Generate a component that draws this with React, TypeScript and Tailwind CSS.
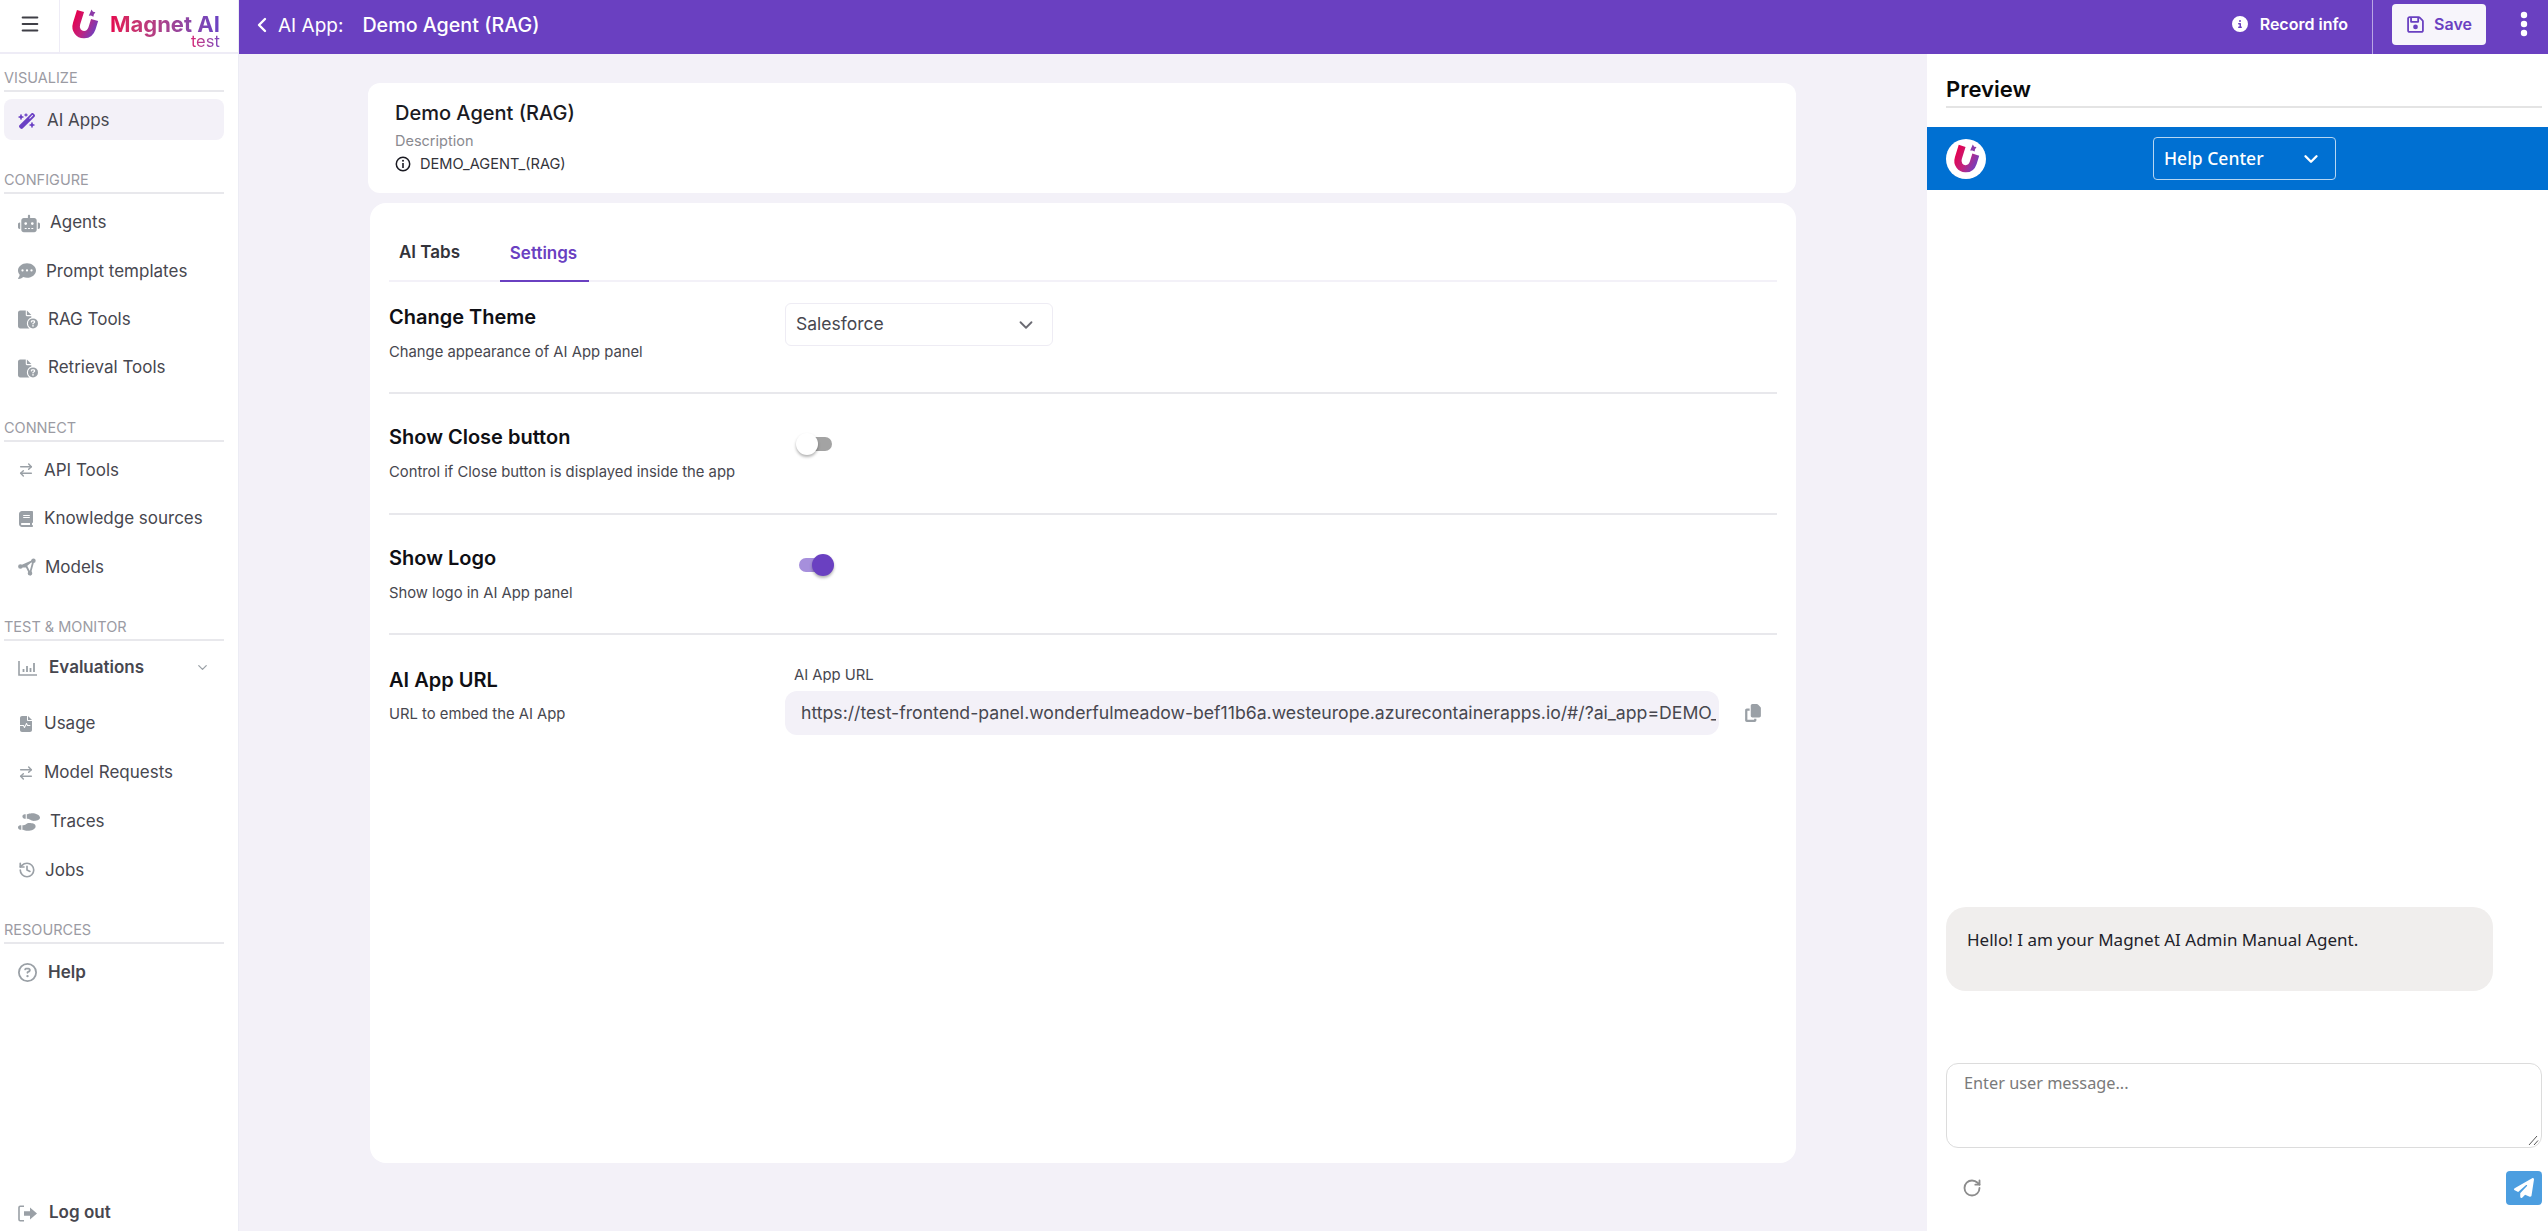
import { ArrowRightLeft, ChevronDown, ChevronLeft, History, Menu, RotateCw } from "lucide-react";
import {
  FaBook,
  FaCircleInfo,
  FaCommentDots,
  FaCopy,
  FaFileCircleQuestion,
  FaFileWaveform,
  FaPaperPlane,
  FaRegCircleQuestion,
  FaRegFloppyDisk,
  FaRobot,
  FaShoePrints,
  FaWandMagicSparkles,
} from "react-icons/fa6";

const MagnetLogo = ({ size = 30, id = "magnet" }: { size?: number; id?: string }) => (
  <svg width={size} height={size} viewBox="0 0 30 30" fill="none">
    <defs>
      <linearGradient id={id} gradientUnits="userSpaceOnUse" x1="4" y1="8" x2="28" y2="20">
        <stop offset="0" stopColor="#e5004e" />
        <stop offset="0.5" stopColor="#c0237f" />
        <stop offset="1" stopColor="#6a42c4" />
      </linearGradient>
    </defs>
    <path
      d="M10.5 2 L6.6 14.5 C4.6 21 9 25.4 13.8 25.6 C18 25.8 20.8 23 22 19.4 L24.6 11"
      stroke={`url(#${id})`}
      strokeWidth="7.4"
    />
    <path d="M21.5 0.5 L23 2.8 L25.4 3.2 L23.8 5.4 L23.4 7.8 L21 6.6 L18.8 6.8 L19.8 4.4 Z" fill="#8c3aa8" />
  </svg>
);

const ModelsIcon = () => (
  <svg width="18" height="18" viewBox="0 0 18 18" fill="#9aa0a6" stroke="#9aa0a6" strokeWidth="1.8">
    <path d="M2 8.5 L15.5 2.5 L12 15.5 L8.5 8.5 Z" fill="none" />
    <path d="M2 8.5 L15.5 2.5 L8.5 8.5 Z" stroke="none" />
    <circle cx="2.4" cy="8.5" r="1.4" />
    <circle cx="15.4" cy="2.8" r="1.4" />
    <circle cx="12" cy="15.2" r="1.4" />
  </svg>
);

const ChartIcon = () => (
  <svg width="20" height="16" viewBox="0 0 20 16" fill="none" stroke="#9aa0a6">
    <path d="M1 1 V15 H19" strokeWidth="1.6" />
    <path d="M5.5 12 V9 M9 12 V6 M12.5 12 V8 M16 12 V3" strokeWidth="1.8" />
  </svg>
);

const LogoutIcon = () => (
  <svg width="20" height="17" viewBox="0 0 20 17" fill="none">
    <path d="M6 1.2 H2.2 C1.5 1.2 1 1.7 1 2.4 V14.6 C1 15.3 1.5 15.8 2.2 15.8 H6" stroke="#9aa0a6" strokeWidth="1.6" />
    <path d="M6 6.2 H12 V2.5 L19 8.5 L12 14.5 V10.8 H6 Z" fill="#9aa0a6" />
  </svg>
);

const iconClass = "text-[#9aa0a6]";

const configureItems = [
  { name: "Agents", icon: <FaRobot size={19} className={`${iconClass} w-[22px]`} />, gapClass: "gap-[10px]" },
  { name: "Prompt templates", icon: <FaCommentDots size={18} className={iconClass} />, gapClass: "gap-[10px]" },
  { name: "RAG Tools", icon: <FaFileCircleQuestion size={19} className={`${iconClass} w-[20px]`} />, gapClass: "gap-[10px]" },
  { name: "Retrieval Tools", icon: <FaFileCircleQuestion size={19} className={`${iconClass} w-[20px]`} />, gapClass: "gap-[10px]" },
];

const connectItems = [
  { name: "API Tools", icon: <ArrowRightLeft size={18} strokeWidth={2.2} className={`${iconClass} w-[16px]`} />, gapClass: "gap-[10px]" },
  { name: "Knowledge sources", icon: <FaBook size={16} className={`${iconClass} w-[16px]`} />, gapClass: "gap-[10px]" },
  { name: "Models", icon: <ModelsIcon />, gapClass: "gap-[9px]" },
];

const monitorItems = [
  { name: "Usage", icon: <FaFileWaveform size={16} className={`${iconClass} w-[16px]`} />, gapClass: "gap-[10px]" },
  { name: "Model Requests", icon: <ArrowRightLeft size={18} strokeWidth={2.2} className={`${iconClass} w-[16px]`} />, gapClass: "gap-[10px]" },
  { name: "Traces", icon: <FaShoePrints size={18} className={`${iconClass} w-[22px]`} />, gapClass: "gap-[10px]" },
  { name: "Jobs", icon: <History size={18} strokeWidth={2.2} className={iconClass} />, gapClass: "gap-[9px]" },
];

const SectionLabel = ({ label, className = "" }: { label: string; className?: string }) => (
  <div className={`box-border h-[23px] shrink-0 border-b-2 border-[#e8e8ec] text-[14.5px] leading-[18px] text-[#9b9ba3] ${className}`}>
    {label}
  </div>
);

const NavRow = ({ name, icon, gapClass, rowHeight }: { name: string; icon: React.ReactNode; gapClass: string; rowHeight: string }) => (
  <div className={`flex items-center pt-[2px] pl-[14px] text-[17px] text-[#47474f] ${rowHeight} ${gapClass}`}>
    {icon}
    <span>{name}</span>
  </div>
);

const Sidebar = () => (
  <aside className="flex h-full w-[239px] shrink-0 flex-col border-r border-[#ececf4] bg-white">
    <div className="flex h-[54px] shrink-0 items-start border-b-2 border-[#eeecf6]">
      <div className="flex h-full w-[60px] items-center justify-center border-r border-[#eeecf6] pb-[5px]">
        <Menu size={22} strokeWidth={2.2} className="text-[#3f3f46]" />
      </div>
      <div className="flex items-start gap-[10px] pl-[10px]">
        <div className="mt-[9px]">
          <MagnetLogo size={30} id="magnet-side" />
        </div>
        <div className="mt-[12px] flex flex-col items-end">
          <span className="bg-gradient-to-r from-[#e5004e] to-[#6a42c4] bg-clip-text text-[22px] leading-[25px] font-bold text-transparent">
            Magnet AI
          </span>
          <span className="mt-[-3px] bg-gradient-to-r from-[#d81e73] to-[#7a46bf] bg-clip-text text-[16.5px] leading-[14px] text-transparent">
            test
          </span>
        </div>
      </div>
    </div>

    <nav className="flex flex-1 flex-col pt-[15px] pr-[14px] pb-[3px] pl-1">
      <SectionLabel label="VISUALIZE" />
      <div className="mt-[7px] flex h-[41px] items-center gap-[11px] rounded-lg bg-[#f3f1f8] pt-[2px] pl-[14px] text-[17px] text-[#47474f]">
        <FaWandMagicSparkles size={18} className="text-[#6a40c4]" />
        <span>AI Apps</span>
      </div>

      <SectionLabel label="CONFIGURE" className="mt-[31px]" />
      <div className="mt-1">
        {configureItems.map((item) => (
          <NavRow key={item.name} {...item} rowHeight="h-[48.3px]" />
        ))}
      </div>

      <SectionLabel label="CONNECT" className="mt-[28px]" />
      <div className="mt-[3px]">
        {connectItems.map((item) => (
          <NavRow key={item.name} {...item} rowHeight="h-[48.5px]" />
        ))}
      </div>

      <SectionLabel label="TEST & MONITOR" className="mt-[27px]" />
      <div className="mt-1 flex h-[44px] items-center gap-[11px] pt-[2px] pl-[14px] text-[17px] font-semibold text-[#47474f]">
        <ChartIcon />
        <span>Evaluations</span>
        <ChevronDown size={15} className="mr-[14px] ml-auto text-[#9aa0a6]" />
      </div>
      <div className="mt-[10px]">
        {monitorItems.map((item) => (
          <NavRow key={item.name} {...item} rowHeight="h-[48.8px]" />
        ))}
      </div>

      <SectionLabel label="RESOURCES" className="mt-[27px]" />
      <div className="mt-[7px] flex h-[42px] items-center gap-[11px] pt-[2px] pl-[14px] text-[17px] font-semibold text-[#47474f]">
        <FaRegCircleQuestion size={19} className={iconClass} />
        <span>Help</span>
      </div>

      <div className="mt-auto flex h-[30px] items-center gap-[11px] pl-[14px] text-[17px] font-semibold text-[#47474f]">
        <LogoutIcon />
        <span>Log out</span>
      </div>
    </nav>
  </aside>
);

const TopBar = () => (
  <header className="flex h-[54px] shrink-0 items-center bg-[#6a40c1] text-white">
    <ChevronLeft size={24} strokeWidth={2.4} className="mb-[4px] ml-[11px]" />
    <span className="mb-[2px] ml-[4px] text-[19px]">AI App:</span>
    <span className="mb-[2px] ml-[19px] text-[19.7px] font-medium">Demo Agent (RAG)</span>
    <div className="ml-auto flex h-full items-center">
      <FaCircleInfo size={16} className="mb-[6px]" />
      <span className="mb-[6px] ml-[12px] text-[16px] font-semibold">Record info</span>
      <div className="ml-[24px] h-full w-px bg-[#b9a6e3]" />
      <button className="mb-[6px] ml-[19px] flex h-[41px] w-[94px] items-center justify-center gap-[9px] rounded bg-[#f7f5fb] text-[16px] font-semibold text-[#6a40c1]">
        <FaRegFloppyDisk size={19} />
        Save
      </button>
      <div className="mb-[6px] flex w-[62px] justify-center pl-[14px]">
        <svg width="8" height="26" viewBox="0 0 8 26" fill="white">
          <circle cx="4" cy="4" r="3.2" />
          <circle cx="4" cy="13" r="3.2" />
          <circle cx="4" cy="22" r="3.2" />
        </svg>
      </div>
    </div>
  </header>
);

const SettingRow = ({
  title,
  description,
  height,
  children,
}: {
  title: string;
  description: string;
  height: string;
  children: React.ReactNode;
}) => (
  <div className={`flex border-b-2 border-[#e8e8ec] ${height}`}>
    <div className="w-[396px] shrink-0">
      <div className="text-[20px] leading-[28px] font-semibold text-[#0f0f14]">{title}</div>
      <div className="mt-[11px] text-[14.8px] leading-[20px] text-[#47474f]">{description}</div>
    </div>
    {children}
  </div>
);

const Toggle = ({ on }: { on: boolean }) => (
  <div className="relative h-[14px] w-[36px]">
    <div className={`ml-[2px] h-full w-[34px] rounded-full ${on ? "bg-[#a68fdc]" : "bg-[#a3a3a3]"}`} />
    <div
      className={`absolute top-[-4px] h-[22px] w-[22px] rounded-full shadow-[0_2px_3px_rgba(0,0,0,0.3)] ${
        on ? "right-[-1px] bg-[#6a40c1]" : "left-0 bg-white"
      }`}
    />
  </div>
);

const MainPanel = () => (
  <main className="flex min-w-0 flex-1 flex-col bg-[#f3f1f8] pt-[29px] pr-[131px] pl-[129px]">
    <section className="h-[110px] shrink-0 rounded-xl bg-white pt-[15px] pl-[27px]">
      <div className="text-[20px] leading-[30px] font-medium text-[#1a1a22]">Demo Agent (RAG)</div>
      <div className="mt-[3px] text-[14.5px] leading-[20px] text-[#8a8a90]">Description</div>
      <div className="mt-[3px] flex items-center gap-[9px] text-[14.6px] leading-[20px] text-[#33333a]">
        <svg width="16" height="16" viewBox="0 0 16 16" fill="none" stroke="#1a1a22">
          <circle cx="8" cy="8" r="6.7" strokeWidth="1.5" />
          <path d="M8 7 V12" strokeWidth="1.6" />
          <circle cx="8" cy="4.8" r="1" fill="#1a1a22" stroke="none" />
        </svg>
        DEMO_AGENT_(RAG)
      </div>
    </section>

    <section className="mt-[10px] ml-[2px] h-[960px] shrink-0 rounded-2xl bg-white px-[19px]">
      <div className="flex h-[79px] items-end border-b-2 border-[#f3f1f8]">
        <div className="flex h-[56px] w-[111px] items-center pt-[2px] pl-[10px] text-[17px] font-semibold text-[#33333a]">
          AI Tabs
        </div>
        <div className="mb-[-2px] flex h-[56px] w-[89px] items-center justify-center border-b-2 border-[#6a40c1] pt-[2px] pr-[2px] text-[17px] font-semibold text-[#6a40c1]">
          Settings
        </div>
      </div>

      <div className="pt-[21px]">
        <SettingRow title="Change Theme" description="Change appearance of AI App panel" height="h-[91px]">
          <div className="flex h-[43px] w-[268px] items-center justify-between rounded-md border border-[#eeecf4] pr-[15px] pl-[10px] text-[17.5px] text-[#47474f]">
            Salesforce
            <ChevronDown size={22} className="text-[#6b6b73]" />
          </div>
        </SettingRow>
        <SettingRow title="Show Close button" description="Control if Close button is displayed inside the app" height="h-[121px] pt-[29px]">
          <div className="mt-[14px] ml-[11px]">
            <Toggle on={false} />
          </div>
        </SettingRow>
        <SettingRow title="Show Logo" description="Show logo in AI App panel" height="h-[120px] pt-[29px]">
          <div className="mt-[14px] ml-[12px]">
            <Toggle on />
          </div>
        </SettingRow>
        <div className="flex pt-[31px]">
          <div className="w-[396px] shrink-0">
            <div className="text-[20px] leading-[28px] font-semibold text-[#0f0f14]">AI App URL</div>
            <div className="mt-[10px] text-[14.8px] leading-[20px] text-[#47474f]">URL to embed the AI App</div>
          </div>
          <div className="flex-1">
            <div className="pl-[9px] text-[14.8px] leading-[18px] text-[#47474f]">AI App URL</div>
            <div className="mt-[7px] flex items-center">
              <div className="flex h-[44px] w-[934px] items-center overflow-hidden rounded-xl bg-[#f3f1f8] pr-[3px] pl-[16px] text-[17.65px] whitespace-nowrap text-[#47474f]">
                <span className="overflow-hidden">https://test-frontend-panel.wonderfulmeadow-bef11b6a.westeurope.azurecontainerapps.io/#/?ai_app=DEMO_AGENT_(RAG)</span>
              </div>
              <FaCopy size={18} className="ml-[25px] text-[#9aa0a6]" />
            </div>
          </div>
        </div>
      </div>
    </section>
  </main>
);

const PreviewPanel = () => (
  <aside className="flex w-[621px] shrink-0 flex-col bg-white pb-[26px]">
    <div className="mr-[6px] ml-[19px] h-[54px] border-b-2 border-[#e4e4e4] pt-[19px] text-[22px] leading-[32px] font-semibold text-[#0a0a0a]">
      Preview
    </div>
    <div className="mt-[19px] flex h-[63px] items-center bg-[#0070d2] pl-[19px]">
      <div className="flex h-[40px] w-[40px] items-center justify-center rounded-full bg-white">
        <MagnetLogo size={29} id="magnet-preview" />
      </div>
      <div className="ml-[167px] flex h-[43px] w-[183px] items-center justify-between rounded border border-[#b6d6f2] pr-[13px] pl-[10px] font-['Noto_Sans',sans-serif] text-[17.5px] font-medium text-white">
        Help Center
        <ChevronDown size={22} strokeWidth={2.6} />
      </div>
    </div>

    <div className="mr-[6px] ml-[19px] flex flex-1 flex-col justify-end font-['Noto_Sans',sans-serif]">
      <div className="mb-[72px] h-[84px] w-[547px] rounded-[20px] bg-[#f0eeed] pt-[21px] pl-[21px] text-[17px] leading-[24px] text-[#22222a]">
        Hello! I am your Magnet AI Admin Manual Agent.
      </div>
      <div className="relative h-[85px] rounded-xl border border-[#dcdcdc] pt-[8px] pl-[17px] text-[16.3px] leading-[22px] text-[#7a7a7a]">
        Enter user message...
        <svg width="12" height="12" viewBox="0 0 12 12" className="absolute right-[2px] bottom-[1px]" stroke="#555" fill="none">
          <path d="M2 11 L10 2 M7 11 L11 6.5" />
        </svg>
      </div>
      <div className="mt-[23px] flex items-center justify-between pl-[16px]">
        <RotateCw size={20} strokeWidth={2.2} className="text-[#8c8c8c]" />
        <div className="flex h-[34px] w-[36px] items-center justify-center rounded bg-[#4c9ee0]">
          <FaPaperPlane size={20} className="text-white" />
        </div>
      </div>
    </div>
  </aside>
);

export default function App() {
  return (
    <div className="flex h-[1231px] w-[2548px] overflow-hidden font-['Inter',sans-serif]">
      <Sidebar />
      <div className="flex min-w-0 flex-1 flex-col">
        <TopBar />
        <div className="flex min-h-0 flex-1">
          <MainPanel />
          <PreviewPanel />
        </div>
      </div>
    </div>
  );
}
